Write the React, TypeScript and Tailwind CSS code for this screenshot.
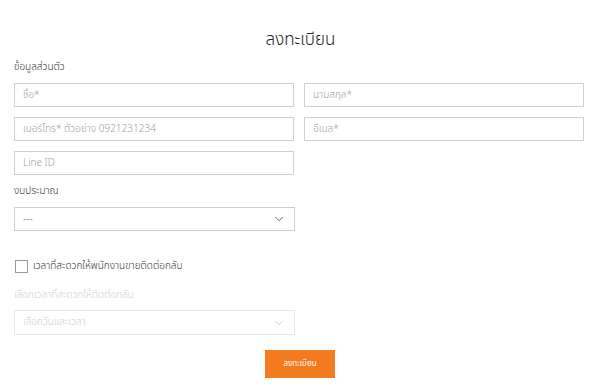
import { ChevronDown } from "lucide-react";

const font = { fontFamily: '"Noto Sans Thai", "Noto Sans", "Liberation Sans", sans-serif' };

function Field({ placeholder }: { placeholder: string }) {
  return (
    <div className="h-[24px] border border-[#cfcfcf] px-2 flex items-center text-[10px] font-light text-[#a0a0a0]">
      {placeholder}
    </div>
  );
}

export default function App() {
  return (
    <div className="w-[600px] h-[392px] bg-white pl-[14px] pr-[16px] pt-[29px]" style={font}>
      <h1 className="text-center text-[17px] leading-[22px] font-light text-[#222] ml-[3px]">ลงทะเบียน</h1>

      <p className="mt-[9px] text-[10px] leading-[14px] font-light text-[#333]">ข้อมูลส่วนตัว</p>

      {/* Personal info */}
      <div className="mt-[9px] grid grid-cols-2 gap-x-[10px] gap-y-[10px]">
        <Field placeholder="ชื่อ*" />
        <Field placeholder="นามสกุล*" />
        <Field placeholder="เบอร์โทร* ตัวอย่าง 0921231234" />
        <Field placeholder="อีเมล*" />
        <Field placeholder="Line ID" />
      </div>

      <p className="mt-[9px] text-[10px] leading-[14px] font-light text-[#333]">งบประมาณ</p>

      <div className="mt-[9px] w-[281px] h-[24px] border border-[#cfcfcf] pl-2 pr-2 flex items-center justify-between text-[10px] text-[#a0a0a0]">
        <span>---</span>
        <ChevronDown size={14} strokeWidth={1.5} className="text-[#555]" />
      </div>

      {/* Contact time */}
      <label className="mt-[28px] flex items-center gap-[5px] ml-[1px]">
        <span className="w-[13px] h-[13px] border border-[#9a9a9a] bg-white" />
        <span className="text-[10px] leading-[14px] font-light text-[#333]">เวลาที่สะดวกให้พนักงานขายติดต่อกลับ</span>
      </label>

      <p className="mt-[15px] text-[10px] leading-[14px] font-light text-[#cfcfcf]">เลือกเวลาที่สะดวกให้ติดต่อกลับ</p>

      <div className="mt-[8px] w-[281px] h-[25px] border border-[#e6e6e6] pl-2 pr-2 flex items-center justify-between text-[10px] font-light text-[#cfcfcf]">
        <span>เลือกวันและเวลา</span>
        <ChevronDown size={14} strokeWidth={1.5} className="text-[#c8c8c8]" />
      </div>

      <div className="mt-[15px] flex justify-center">
        <button className="w-[70px] h-[28px] bg-[#f47a20] text-white text-[8px] ml-[2px]">ลงทะเบียน</button>
      </div>
    </div>
  );
}
